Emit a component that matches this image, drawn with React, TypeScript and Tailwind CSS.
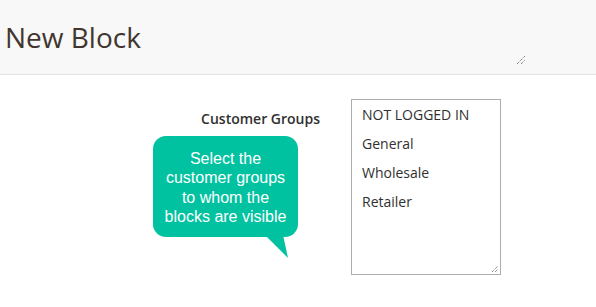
export default function App() {
  const groups = ["NOT LOGGED IN", "General", "Wholesale", "Retailer"];

  return (
    <div className="w-[596px] h-[307px] bg-white overflow-hidden" style={{ fontFamily: '"Open Sans", sans-serif' }}>
      <div className="relative h-[75px] bg-[#f8f8f8] border-b border-[#e3e3e3] pl-[5px] pt-[19px]">
        <h1 className="text-[28px] leading-[36px] font-normal text-[#41362f]">New Block</h1>
        <svg className="absolute left-[516px] top-[55px]" width="10" height="10" viewBox="0 0 10 10">
          <path d="M1 9 L9 1 M5 9 L9 5" stroke="#555" strokeWidth="1" strokeDasharray="1 1" />
        </svg>
      </div>

      <div className="relative flex mt-[24px]">
        <div className="w-[320px] pt-[7px] text-right">
          <span className="text-[14px] leading-[20px] font-semibold text-[#303030]">Customer Groups</span>
        </div>

        <div className="relative ml-[31px] w-[150px] h-[176px] border border-[#adadad] bg-white">
          {groups.map((g) => (
            <div key={g} className="pl-[10px] text-[14px] leading-[29px] text-[#303030]">
              {g}
            </div>
          ))}
          <svg className="absolute right-[1px] bottom-[1px]" width="8" height="8" viewBox="0 0 8 8">
            <path d="M1 7 L7 1 M4 7 L7 4" stroke="#666" strokeWidth="1" strokeDasharray="1 1" />
          </svg>
        </div>

        <div className="absolute left-[153px] top-[37px] w-[145px] h-[101px] rounded-[13px] bg-[#01c2a0] flex items-center justify-center pt-[2px]">
          <p
            className="text-center text-white text-[16px] leading-[19.3px]"
            style={{ fontFamily: '"Liberation Sans", Arial, sans-serif' }}
          >
            Select the
            <br />
            customer groups
            <br />
            to whom the
            <br />
            blocks are visible
          </p>
          <svg className="absolute left-[112px] top-[99px]" width="26" height="24" viewBox="0 0 26 24">
            <polygon points="0,0 18,0 23,23" fill="#01c2a0" />
          </svg>
        </div>
      </div>
    </div>
  );
}
